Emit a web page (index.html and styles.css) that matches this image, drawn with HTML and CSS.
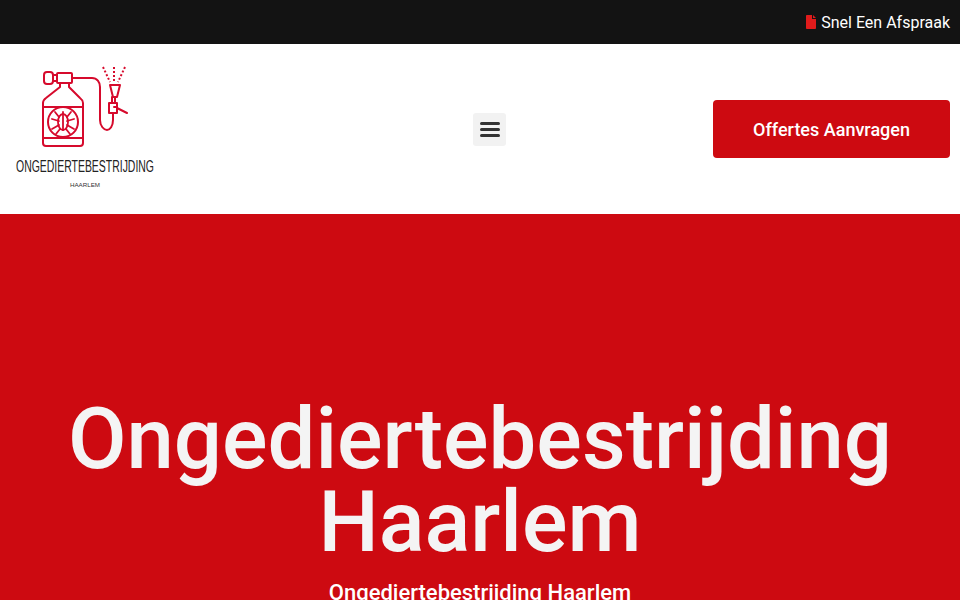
FILE: index.html
```html
<!DOCTYPE html>
<html lang="nl">
<head>
  <meta charset="UTF-8">
  <title>Ongediertebestrijding Haarlem</title>
  <meta name="viewport" content="width=device-width, initial-scale=1.0">
  <link rel="stylesheet" href="styles.css">
</head>
<body>

  <!-- Top bar -->
  <div class="topbar">
    <a class="topbar-link" href="#">
      <svg class="topbar-icon" viewBox="0 0 10 14" width="10" height="14"><path d="M0 .8C0 .4.4 0 .8 0H6v3.4c0 .3.3.6.6.6H10v9.2c0 .4-.4.8-.8.8H.8c-.4 0-.8-.4-.8-.8zM7 0l3 3H7z"/></svg>
      Snel Een Afspraak
    </a>
  </div>

  <!-- Header -->
  <header class="header">
    <a class="logo" href="#">
      <svg viewBox="0 0 170 170" width="170" height="170">
        <g class="logo-lines">
          <rect x="44" y="28" width="9" height="12" rx="3"/>
          <path d="M53 31h4M53 37h4"/>
          <rect x="57" y="29" width="15" height="10" rx="1"/>
          <path d="M60 39v4L46 54c-2 1.500-3 3-3 5v40c0 2 1 3 3 3h34c2 0 3-1 3-3V59c0-2-1-3.500-3-5L69 43v-4"/>
          <path d="M43 63h40M43 94h40"/>
          <path d="M72 34h20c5 0 8 4 8 9v33c0 6 4 10 7 10s6-4 6-10v-7"/>
          <path d="M110 41h10l-3 12h-4z"/>
          <path d="M112 53v6M115 53v6"/>
          <path d="M109 59h8v10h-8z"/>
          <path d="M114 63h3M117 64l10 5"/>
          <path class="dash" d="M103 23l7 15M114 23v15M125 23l-7 15"/>
          <circle cx="63" cy="78" r="15"/>
          <g class="logo-bug">
            <ellipse cx="63" cy="78" rx="5" ry="8"/>
            <path d="M63 68v18M55 68l4 5M71 68l-4 5M52 75l7 2M74 75l-7 2M52 85l7-4M74 85l-7-4M56 90l4-5M70 90l-4-5"/>
          </g>
        </g>
        <text class="logo-name" x="16" y="128" textLength="138" lengthAdjust="spacingAndGlyphs">ONGEDIERTEBESTRIJDING</text>
        <text class="logo-city" x="70" y="143" textLength="30" lengthAdjust="spacingAndGlyphs">HAARLEM</text>
      </svg>
    </a>

    <button class="menu-toggle" aria-label="Menu">
      <span></span><span></span><span></span>
    </button>

    <a class="cta" href="#">Offertes Aanvragen</a>
  </header>

  <!-- Hero -->
  <section class="hero">
    <h1>Ongediertebestrijding Haarlem</h1>
    <h2>Ongediertebestrijding Haarlem</h2>
  </section>

</body>
</html>
```

FILE: styles.css
```css
* { box-sizing: border-box; margin: 0; padding: 0; }

html, body {
  height: 600px;
  overflow: hidden;
}

body {
  font-family: Roboto, 'Liberation Sans', sans-serif;
  background: #fff;
}

a { text-decoration: none; }

.topbar {
  height: 44px;
  background: #131313;
  display: flex;
  align-items: center;
  justify-content: flex-end;
  padding: 0 10px;
}

.topbar-link {
  display: flex;
  align-items: center;
  gap: 5px;
  color: #fff;
  font-size: 16px;
}

.topbar-icon { fill: #e01b1b; }

.header {
  height: 170px;
  background: #fff;
  display: flex;
  align-items: center;
  justify-content: space-between;
  padding-right: 10px;
}

.logo { display: block; height: 170px; }

.logo-lines {
  fill: none;
  stroke: #d60a2c;
  stroke-width: 2;
  stroke-linejoin: round;
  stroke-linecap: round;
}

.logo-lines .dash {
  stroke-dasharray: 2 2;
  stroke-linecap: butt;
}

.logo-bug { stroke-width: 1.8; }

.logo-name {
  font-family: 'Liberation Sans', sans-serif;
  font-size: 16px;
  fill: #222;
}

.logo-city {
  font-family: 'Liberation Sans', sans-serif;
  font-size: 6px;
  fill: #333;
}

.menu-toggle {
  width: 33px;
  height: 33px;
  margin-left: 96px;
  background: #f2f2f2;
  border: none;
  border-radius: 3px;
  display: flex;
  flex-direction: column;
  align-items: center;
  justify-content: center;
  gap: 3px;
}

.menu-toggle span {
  width: 20px;
  height: 3px;
  border-radius: 2px;
  background: #333;
}

.cta {
  width: 237px;
  height: 58px;
  background: #cd0a11;
  color: #fff;
  border-radius: 4px;
  font-size: 18px;
  font-weight: 500;
  display: flex;
  align-items: center;
  justify-content: center;
}

.hero {
  background: #cd0a11;
  height: 386px;
  padding-top: 184px;
  color: #f4f4f4;
  text-align: center;
}

.hero h1 {
  font-size: 85px;
  font-weight: 500;
  line-height: 83px;
  padding: 0 60px;
}

.hero h2 {
  margin-top: 16px;
  font-size: 22px;
  font-weight: 500;
  color: #fff;
}
```
